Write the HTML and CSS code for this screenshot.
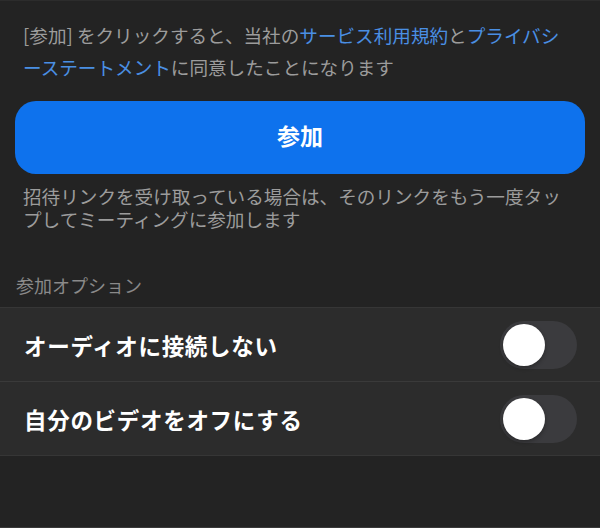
FILE: index.html
```html
<!DOCTYPE html>
<html lang="ja">
<head>
<meta charset="utf-8">
<link rel="stylesheet" href="styles.css">
</head>
<body>
<div class="page">
  <p class="terms">[参加] をクリックすると、当社の<span class="link">サービス利用規約</span>と<span class="link">プライバシーステートメント</span>に同意したことになります</p>
  <div class="btn-wrap"><button class="join">参加</button></div>
  <p class="hint">招待リンクを受け取っている場合は、そのリンクをもう一度タップしてミーティングに参加します</p>
  <div class="section-title">参加オプション</div>
  <div class="list">
    <div class="row">
      <span class="label">オーディオに接続しない</span>
      <span class="toggle"><span class="knob"></span></span>
    </div>
    <div class="row">
      <span class="label">自分のビデオをオフにする</span>
      <span class="toggle"><span class="knob"></span></span>
    </div>
  </div>
</div>
</body>
</html>
```
FILE: styles.css
```css
html, body {
  margin: 0;
  padding: 0;
  background: #232323;
}
body {
  font-family: "Noto Sans CJK JP", "Noto Sans", sans-serif;
  width: 600px;
  height: 528px;
  overflow: hidden;
}
.page {
  display: flex;
  flex-direction: column;
  border-top: 1px solid #2c2c2c;
  border-bottom: 1px solid #3a3a3a;
  height: 526px;
}
.terms {
  margin: 0;
  padding: 18px 30px 0 23px;
  font-size: 18.6px;
  line-height: 32px;
  color: #9c9c9c;
}
.link {
  color: #4a8fe3;
}
.btn-wrap {
  padding: 18px 15px 0 15px;
}
.join {
  display: block;
  width: 100%;
  height: 73px;
  border: none;
  border-radius: 21px;
  background: #0e72ed;
  color: #ffffff;
  font-family: "Noto Sans CJK JP", sans-serif;
  font-size: 23px;
  font-weight: 700;
  line-height: 1;
  padding: 0 0 4px 0;
}
.hint {
  margin: 0;
  padding: 10px 21px 0 23px;
  font-size: 18.6px;
  line-height: 23px;
  color: #9c9c9c;
}
.section-title {
  padding: 44px 16px 0 16px;
  font-size: 18px;
  line-height: 22px;
  color: #8a8a8a;
  margin-bottom: 11px;
}
.list {
  background: #2c2c2c;
  border-top: 1px solid #363636;
  border-bottom: 1px solid #363636;
}
.row {
  display: flex;
  align-items: center;
  justify-content: space-between;
  height: 73px;
  padding: 0 23px 0 24px;
}
.row + .row {
  border-top: 1px solid #3a3a3a;
}
.label {
  color: #ffffff;
  font-size: 22.5px;
  font-weight: 700;
  letter-spacing: 0.7px;
}
.toggle {
  width: 77px;
  height: 48px;
  border-radius: 24px;
  background: #3b3b3e;
  display: flex;
  align-items: center;
  padding-left: 3px;
  box-sizing: border-box;
}
.knob {
  width: 42px;
  height: 42px;
  border-radius: 50%;
  background: #ffffff;
  box-shadow: 0 2px 4px rgba(0,0,0,0.3);
}
```
